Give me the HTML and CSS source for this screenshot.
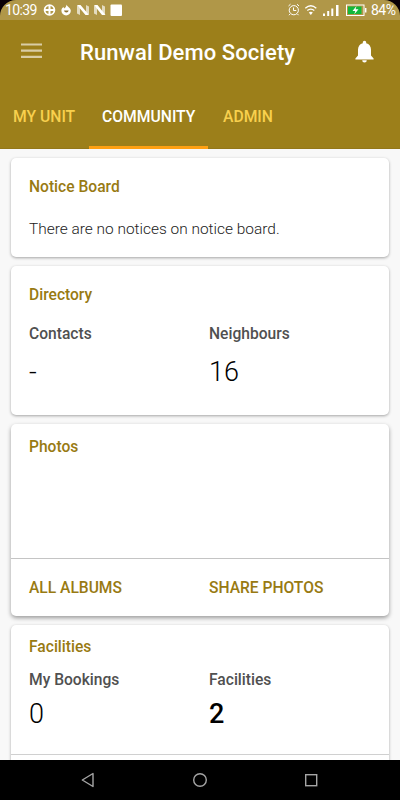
FILE: index.html
```html
<!DOCTYPE html>
<html lang="en">
<head>
<meta charset="utf-8">
<title>Runwal Demo Society</title>
<link rel="stylesheet" href="styles.css">
</head>
<body>
<div class="phone">
  <div class="status">
    <div class="status-inner">
      <span class="clock">10:39</span>
      <svg class="notifications" width="80" height="20" viewBox="43 0 80 20" fill="#fff">
        <circle cx="49.500" cy="10" r="4.900" fill="none" stroke="#fff" stroke-width="1.800"/>
        <path d="M49.500 5v10M44.500 10h10" stroke="#fff" stroke-width="2"/>
        <path d="M66.300 4.500c.5 1.800 4.500 3.300 4.500 6.200a4.700 4.700 0 0 1-9.400 0c0-2 1.200-3.200 2.300-3.400l.8 1.100c1.300-1 1.900-2.300 1.800-3.900z"/>
        <path d="M64 10.500h4.700a2.400 2.400 0 0 1-4.700 0z" fill="#8e7436"/>
        <path d="M77 5.500l3 2v7.500l-3-1.500zM86 5l3 1.500v8l-3-1.500zM94 5.500l3 2v7.500l-3-1.500zM102 5l3 1.500v8l-3-1.500z" opacity=".65"/>
        <path d="M77 5h3.500l8.500 10h-3.500zM94 5h3.500l8 10H102z"/>
        <rect x="110.500" y="4.500" width="11.500" height="11.500" rx="1"/>
      </svg>
      <svg class="system" width="82" height="20" viewBox="287 0 82 20" fill="none" stroke="#fff">
        <circle cx="293.800" cy="10.200" r="4.600"/>
        <path d="M293.500 7.500v3h2.800M288.500 6l2-1.800M299 6l-2-1.800M290 14l-1 1.200M297.500 14l1 1.200"/>
        <path d="M305.300 8.200q5.500-5 11 0M307.300 10.600q3.500-3 7 0" stroke-width="1.300"/>
        <path d="M308.800 12.500q2-1.500 4 0l-2 2.500z" fill="#fff" stroke="none"/>
        <path d="M323 13.500h2v2.500h-2zM327.200 11h2v5h-2zM331.300 8.500h2v7.500h-2zM336 5h2.500v11H336z" fill="#fff" stroke="none"/>
        <rect x="346.500" y="5" width="17.500" height="10.500" fill="#b09748"/>
        <path d="M348 6.500h13.500v7.500H348z" fill="#12b83b" stroke="none"/>
        <path d="M365.700 8v4.500" stroke-width="1.500"/>
        <path d="M356.500 6l-4 5h2.800l-1 3.300 4.200-5h-2.900z" fill="#fff" stroke="none"/>
      </svg>
      <span class="charge">84%</span>
    </div>
  </div>
  <header class="appbar">
    <svg class="menu" width="22" height="18" viewBox="0 0 22 18"><path d="M0 2.500h21M0 8.700h21M0 14.800h21" stroke="#d9cda5" stroke-width="2.200"/></svg>
    <h1>Runwal Demo Society</h1>
    <svg class="bell" width="20" height="24" viewBox="0 0 20 24" fill="#fff"><path d="M9.500 .8c1 0 1.700.8 1.700 1.700v.7c3.100.7 4.800 3.300 4.800 6.600v5.700l2.600 3v.9H.4v-.9l2.600-3V9.800c0-3.300 1.800-5.900 4.800-6.600v-.7C7.800 1.600 8.500 .8 9.500 .8zM7.200 20.300h4.600a2.300 2.300 0 0 1-4.600 0z"/></svg>
  </header>
  <nav class="tabs">
    <span class="tab unit">MY UNIT</span>
    <span class="tab active">COMMUNITY</span>
    <span class="tab admin">ADMIN</span>
  </nav>
  <main class="content">
    <section class="card notice">
      <h2>Notice Board</h2>
      <p>There are no notices on notice board.</p>
    </section>
    <section class="card directory">
      <h2>Directory</h2>
      <div class="grid">
        <div><h3>Contacts</h3><div class="num">-</div></div>
        <div><h3>Neighbours</h3><div class="num">16</div></div>
      </div>
    </section>
    <section class="card photos">
      <h2>Photos</h2>
      <div class="grid actions"><span>ALL ALBUMS</span><span>SHARE PHOTOS</span></div>
    </section>
    <section class="card facilities">
      <h2>Facilities</h2>
      <div class="grid">
        <div><h3>My Bookings</h3><div class="num">0</div></div>
        <div><h3>Facilities</h3><div class="num strong">2</div></div>
      </div>
      <div class="rule"></div>
    </section>
  </main>
  <footer class="navbar">
    <svg width="400" height="40" viewBox="0 0 400 40" fill="none" stroke="#a5a5a5" stroke-width="1.400"><path d="M93 13.500v13L82.300 20z" stroke-linejoin="round"/><circle cx="200" cy="20" r="6.300"/><rect x="305.700" y="14.700" width="11" height="11"/></svg>
  </footer>
</div>
</body>
</html>
```
FILE: styles.css
```css
* { box-sizing: border-box; }
body { margin: 0; font-family: Roboto, "Liberation Sans", sans-serif; }
h1, h2, h3, p { margin: 0; font-weight: 500; }
svg { display: block; flex: none; }
.phone { width: 400px; height: 800px; overflow: hidden; display: flex; flex-direction: column; background: #f8f8f8; }
.status { height: 20px; flex: none; background: #090006; color: #fff; }
.status-inner { height: 20px; display: flex; background: #b09748; border-radius: 16px 16px 0 0; font-size: 14px; line-height: 20px; white-space: nowrap; }
.clock { width: 38px; margin-left: 5px; letter-spacing: -0.6px; }
.system { margin-left: 164px; }
.charge { margin-left: 2px; letter-spacing: -0.5px; }
.appbar { height: 64px; flex: none; display: flex; background: #9c7f1a; color: #fff; }
.menu { margin: 22px 0 0 21px; }
h1 { width: 275px; margin: 19px 0 0 37px; font-size: 22px; line-height: 28px; letter-spacing: 0.08px; white-space: nowrap; }
.bell { margin-top: 20px; }
.tabs { height: 65px; flex: none; display: flex; background: #9c7f1a; border-bottom: 1px solid #937719; }
.tab { height: 65px; font-size: 15.7px; line-height: 65px; font-weight: 500; color: #f8d04e; white-space: nowrap; }
.unit { width: 89px; padding-left: 13px; }
.active { width: 119px; padding-left: 13px; color: #fff; border-bottom: 3px solid #ffa012; }
.admin { padding-left: 15px; }
.content { flex: 1; min-height: 0; overflow: hidden; padding: 9px 11px 0; display: flex; flex-direction: column; gap: 9px; }
.card { flex: none; background: #fff; border-radius: 5px; padding: 0 18px; box-shadow: 0 1px 3px rgba(0,0,0,.34); }
h2 { font-size: 15.6px; line-height: 20px; color: #987a12; }
h3 { font-size: 15.6px; line-height: 20px; color: #505050; }
.grid { display: grid; grid-template-columns: 180px 1fr; }
.num { font-size: 27px; line-height: 32px; font-weight: 300; color: #000; }
.strong { font-weight: 500; }
.notice { height: 99px; padding-top: 19px; }
.notice p { margin-top: 22px; font-size: 15.45px; line-height: 20px; font-weight: 300; color: #222; }
.directory { height: 149px; padding-top: 19px; }
.directory .grid { margin-top: 19px; }
.directory .num { margin-top: 12px; }
.photos { height: 192px; padding-top: 13px; box-shadow: 0 2px 4px rgba(0,0,0,.38); }
.actions { margin: 101px -18px 0; padding: 0 18px; border-top: 1px solid #c4c4c4; height: 58px; line-height: 58px; font-size: 15.6px; font-weight: 500; color: #987a12; }
.facilities { height: 200px; padding-top: 12px; }
.facilities .grid { margin-top: 13px; }
.facilities .num { margin-top: 8px; }
.rule { height: 1px; margin: 24px -18px 0; background: #d0d0d0; }
.navbar { height: 40px; flex: none; background: #000; }
```
